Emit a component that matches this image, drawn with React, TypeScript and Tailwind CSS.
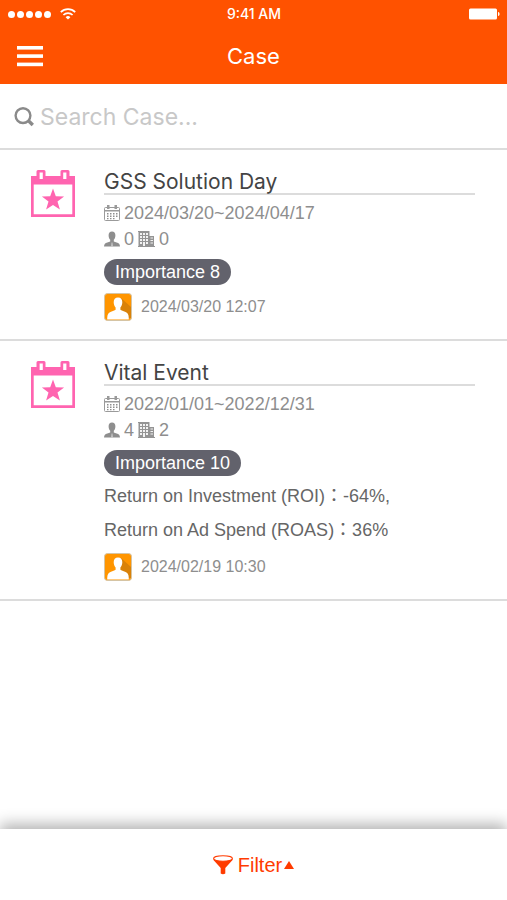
import React from "react";

const ARIAL = "font-['Liberation_Sans','Noto_Sans_CJK_TC',sans-serif]";
const INTER = "font-['Inter','Noto_Sans_CJK_TC',sans-serif]";

type CaseItem = {
  title: string;
  period: string;
  people: number;
  companies: number;
  importance: number;
  metrics: string[];
  updated: string;
};

const cases: CaseItem[] = [
  {
    title: "GSS Solution Day",
    period: "2024/03/20~2024/04/17",
    people: 0,
    companies: 0,
    importance: 8,
    metrics: [],
    updated: "2024/03/20 12:07",
  },
  {
    title: "Vital Event",
    period: "2022/01/01~2022/12/31",
    people: 4,
    companies: 2,
    importance: 10,
    metrics: ["Return on Investment (ROI)：-64%,", "Return on Ad Spend (ROAS)：36%"],
    updated: "2024/02/19 10:30",
  },
];

function WifiIcon() {
  return (
    <svg viewBox="0 0 16 12" className="h-3 w-4" fill="none" stroke="currentColor" strokeWidth="1.7" aria-hidden="true">
      <path d="M0.8 4.2a10.2 10.2 0 0 1 14.4 0" />
      <path d="M3.4 7a6.5 6.5 0 0 1 9.2 0" />
      <path d="M8 11.6 5.6 9.2a3.4 3.4 0 0 1 4.8 0z" fill="currentColor" stroke="none" />
    </svg>
  );
}

function BatteryIcon() {
  return (
    <svg viewBox="0 0 31 12" className="h-3 w-[31px]" fill="currentColor" aria-hidden="true">
      <rect x="0" y="0.5" width="28" height="11" rx="1.5" />
      <path d="M29 4c1.3.3 1.6 1.2 1.6 2s-.3 1.700-1.600 2z" />
    </svg>
  );
}

function MenuIcon() {
  return (
    <svg viewBox="0 0 26 22" className="h-[22px] w-[26px]" fill="currentColor" aria-hidden="true">
      <rect y="1" width="26" height="3.600" />
      <rect y="9.300" width="26" height="3.600" />
      <rect y="17.600" width="26" height="3.600" />
    </svg>
  );
}

function SearchIcon() {
  return (
    <svg viewBox="0 0 20 20" className="size-5 shrink-0" fill="none" stroke="#8a8a8a" aria-hidden="true">
      <circle cx="9" cy="8.600" r="7.400" strokeWidth="2.400" />
      <path d="m14.200 13.600 4.600 4.400" strokeWidth="3.400" />
    </svg>
  );
}

function EventIcon() {
  return (
    <svg viewBox="0 0 44 48" className="h-12 w-11" aria-hidden="true">
      <path
        fill="#ff64b0"
        fillRule="evenodd"
        d="M0 6h5.500V1.500Q5.500 0 7 0h6q1.500 0 1.500 1.500V6h15V1.500Q29.500 0 31 0h6q1.500 0 1.500 1.500V6H44V47H0zM8.600 2.500v6.500h3.200V2.500zM32.200 2.500v6.500h3.200V2.500zM2.700 14.500v29.800h38.600V14.500z"
      />
      <path
        fill="#ff64b0"
        d="m22 18.500 2.800 7.800 8.300.2-6.600 5.100 2.400 8-6.900-4.700-6.900 4.700 2.400-8-6.600-5.100 8.300-.2z"
      />
    </svg>
  );
}

function CalendarIcon() {
  return (
    <svg viewBox="0 0 16 16" className="size-4" aria-hidden="true">
      <path fill="none" stroke="#9a9a9a" d="M1.500 2.500h13q1 0 1 1v11q0 1-1 1h-13q-1 0-1-1v-11q0-1 1-1z" />
      <path fill="#9a9a9a" d="M0 5h16v1.500H0zM3 0h2.500v4H3zM10.500 0H13v4h-2.500z" />
      <path
        fill="#8e8e8e"
        d="M6 8h1.500v1.500H6zM9 8h1.500v1.500H9zM12 8h1.500v1.500H12zM3 10.500h1.500V12H3zM6 10.500h1.500V12H6zM9 10.500h1.500V12H9zM12 10.500h1.500V12H12zM3 8h1.500v1.500H3zM3 13h1.500v1.300H3zM6 13h1.500v1.300H6zM9 13h1.500v1.300H9z"
      />
    </svg>
  );
}

function PersonIcon() {
  return (
    <svg viewBox="0 0 16 16" className="size-4" fill="#8e8e8e" aria-hidden="true">
      <path d="M8 .5c2.200 0 3.400 1.300 3.400 3.800 0 2-.6 3.500-1.600 4.500v1.700c1.600.7 4.300 1.200 5.300 2.300.6.700.8 1.500.9 2.700H0c.1-1.200.3-2 .9-2.700 1-1.100 3.700-1.600 5.300-2.300V8.800c-1-1-1.600-2.500-1.600-4.500C4.600 1.800 5.800.5 8 .5z" />
      <path fill="#d0d0d0" d="m7.600 11.500h.8l.5 4H7.100z" />
    </svg>
  );
}

function BuildingIcon() {
  return (
    <svg viewBox="0 0 17 16" className="h-4 w-[17px]" aria-hidden="true">
      <path fill="#949494" d="M0 0h11.500v5H16v10h1v1H0v-1h.5V1H0z" />
      <path
        fill="#f2f2f2"
        d="M2 2h2v2H2zM5 2h2v2H5zM8 2h2v2H8zM2 5h2v2H2zM5 5h2v2H5zM8 5h2v2H8zM2 8h2v2H2zM5 8h2v2H5zM8 8h2v2H8zM2 11h2v2H2zM5 11h2v4H5zM8 11h2v2H8zM12.500 6.500H15v1h-2.500zM12.500 9H15v1h-2.500zM12.500 11.500H15v1h-2.500z"
      />
    </svg>
  );
}

function Avatar() {
  return (
    <svg viewBox="0 0 28 28" className="size-7" aria-hidden="true">
      <rect x="0.500" y="0.500" width="27" height="27" rx="3" fill="#ff9500" stroke="#d5c4a4" />
      <path d="M17 5 27 14v11H14z" fill="#d98209" />
      <path
        fill="#fff"
        d="M14 4.500c2.800 0 4.300 1.900 4.300 4.800 0 2.300-.8 4-1.900 5.200v2.300c1.500 1.300 5 1.500 6.800 3.200 1.300 1.300 1.600 3.500 1.600 6.500H3.200c0-3 .3-5.200 1.600-6.500 1.800-1.700 5.300-1.900 6.800-3.200v-2.300c-1.100-1.200-1.900-2.900-1.900-5.200 0-2.900 1.500-4.800 4.300-4.800z"
      />
    </svg>
  );
}

function FunnelIcon() {
  return (
    <svg viewBox="0 0 20 20" className="size-5" aria-hidden="true">
      <path fill="#ff3b00" d="M0 4.500 7.700 13v5.500q2.300 1.500 4.600 0V13L20 4.500z" />
      <ellipse cx="10" cy="3.500" rx="9.400" ry="2.700" fill="#fff" stroke="#ff3b00" strokeWidth="1.100" />
    </svg>
  );
}

function CaseCard({ item }: { item: CaseItem }) {
  return (
    <li className="flex items-start border-b-2 border-[#dcdcdc] pt-5 pr-8 pb-[18px] pl-[31px]">
      <EventIcon />
      <div className="ml-[29px] min-w-0 flex-1">
        <h2 className={`${INTER} border-b-2 border-[#dcdcdc] text-[21px] leading-[23px] text-[#444]`}>
          {item.title}
        </h2>
        <p className="mt-[5px] flex h-[26px] items-center gap-1 text-lg text-[#8e8e8e]">
          <CalendarIcon />
          {item.period}
        </p>
        <p className="flex h-[26px] items-center gap-1 text-lg text-[#8e8e8e]">
          <PersonIcon />
          <span>{item.people}</span>
          <BuildingIcon />
          <span>{item.companies}</span>
        </p>
        <p className="mt-[7px] flex">
          <span className="rounded-full bg-[#62626c] px-[11px] text-lg leading-[26px] text-white">
            Importance {item.importance}
          </span>
        </p>
        {item.metrics.length > 0 && (
          <div className="-mb-[2px] pt-[3px] text-lg leading-[34px] text-[#666]">
            {item.metrics.map((line) => (
              <p key={line}>{line}</p>
            ))}
          </div>
        )}
        <p className="mt-2 flex items-center gap-[9px] text-base leading-7 text-[#8e8e8e]">
          <Avatar />
          {item.updated}
        </p>
      </div>
    </li>
  );
}

export default function App() {
  return (
    <div className={`${ARIAL} flex min-h-screen flex-col overflow-x-hidden bg-white`}>
      <header className={`${INTER} bg-[#ff5200] text-white`}>
        <div className="grid h-7 grid-cols-3 items-center pr-[7px] pl-2">
          <div className="flex items-center gap-[9px]">
            <div className="flex gap-[2px]">
              {[0, 1, 2, 3, 4].map((dot) => (
                <span key={dot} className="size-[7px] rounded-full bg-white" />
              ))}
            </div>
            <WifiIcon />
          </div>
          <p className="text-center text-sm font-medium">9:41 AM</p>
          <div className="flex justify-end">
            <BatteryIcon />
          </div>
        </div>
        <div className="grid h-14 grid-cols-3 items-center px-[17px]">
          <button type="button" aria-label="Menu" className="w-fit">
            <MenuIcon />
          </button>
          <h1 className="text-center text-[22px]">Case</h1>
        </div>
      </header>

      <label className="flex h-[66px] items-center gap-[6px] border-b-2 border-[#dcdcdc] px-[14px] pt-[2px]">
        <SearchIcon />
        <input
          type="search"
          aria-label="Search Case"
          placeholder="Search Case..."
          className={`${INTER} min-w-0 flex-1 text-[23px] text-[#444] outline-none placeholder:text-[#c8c8c8]`}
        />
      </label>

      <main className="flex-1">
        <ul>
          {cases.map((item) => (
            <CaseCard key={item.title} item={item} />
          ))}
        </ul>
      </main>

      <footer className="sticky bottom-0 flex h-[71px] items-center justify-center bg-white shadow-[0_-5px_14px_rgba(0,0,0,0.3)]">
        <button type="button" className="flex items-center gap-[5px] text-xl text-[#ff3b00]">
          <FunnelIcon />
          <span className="flex items-center gap-[2px]">
            Filter
            <svg viewBox="0 0 10 8" className="h-2 w-[10px]" fill="currentColor" aria-hidden="true">
              <path d="M5 0 10 8H0z" />
            </svg>
          </span>
        </button>
      </footer>
    </div>
  );
}
